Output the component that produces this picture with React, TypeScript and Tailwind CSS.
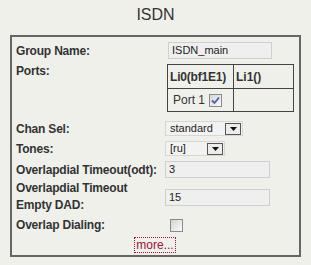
import React from "react";

const label = "text-[12px] font-bold tracking-[-0.2px] text-[#333]";

function Checkbox({ checked }: { checked?: boolean }) {
  return (
    <span className="inline-flex h-[13px] w-[13px] items-center justify-center border border-[#8a8a8a] bg-gradient-to-br from-[#d4d4d4] to-[#fbfbfb]">
      {checked && (
        <svg width="9" height="9" viewBox="0 0 9 9">
          <path d="M1 4.5 L3.5 7 L8 1.5" fill="none" stroke="#4a5fae" strokeWidth="1.8" />
        </svg>
      )}
    </span>
  );
}

function Select({ value, width }: { value: string; width: number }) {
  return (
    <div
      className="flex h-[15px] items-center justify-between border border-[#d6d6d6] bg-[#f2f2f2] pl-[4px] pr-[1px]"
      style={{ width }}
    >
      <span className="text-[11px] leading-none text-[#222]">{value}</span>
      <span className="flex h-[12px] w-[16px] items-center justify-center border border-[#555] bg-[#ececec]">
        <svg width="7" height="4" viewBox="0 0 7 4">
          <path d="M0 0 H7 L3.5 4 Z" fill="#111" />
        </svg>
      </span>
    </div>
  );
}

function TextBox({ value, width }: { value: string; width: number }) {
  return (
    <div
      className="flex h-[17px] items-center border border-[#cfcfcf] bg-[#efefef] pl-[3px] text-[11px] text-[#222]"
      style={{ width }}
    >
      {value}
    </div>
  );
}

export default function App() {
  return (
    <div className="h-[265px] w-[311px] bg-[#f0f0eb] font-['Liberation_Sans',Arial,sans-serif]">
      <div className="pt-[5px] text-center text-[16px] leading-[20px] text-[#333]">ISDN</div>
      <div className="mx-[10px] mt-[10px] h-[222px] border-2 border-[#666] pl-[4px]">
        {/* Group Name */}
        <div className="mt-[5px] flex h-[17px] items-center">
          <div className={`${label} w-[152px]`}>Group Name:</div>
          <TextBox value="ISDN_main" width={104} />
        </div>

        {/* Ports */}
        <div className="mt-[5px] flex items-start">
          <div className={`${label} w-[151px] leading-[14px]`}>Ports:</div>
          <table className="border-collapse border border-[#444] text-[12px] text-[#333]">
            <tbody>
              <tr className="h-[24px]">
                <td className="w-[66px] border border-[#444] pl-[2px] font-bold tracking-[-0.2px]">Li0(bf1E1)</td>
                <td className="w-[60px] border border-[#444] pl-[2px] font-bold">Li1()</td>
              </tr>
              <tr className="h-[23px]">
                <td className="border border-[#444] pl-[5px]">
                  <span className="inline-flex items-center gap-[4px]">
                    Port 1 <Checkbox checked />
                  </span>
                </td>
                <td className="border border-[#444]"></td>
              </tr>
            </tbody>
          </table>
        </div>

        {/* Chan Sel */}
        <div className="mt-[9px] flex h-[15px] items-center">
          <div className={`${label} w-[149px]`}>Chan Sel:</div>
          <Select value="standard" width={78} />
        </div>

        {/* Tones */}
        <div className="mt-[5px] flex h-[15px] items-center">
          <div className={`${label} w-[149px]`}>Tones:</div>
          <Select value="[ru]" width={60} />
        </div>

        {/* odt */}
        <div className="mt-[5px] flex h-[17px] items-center">
          <div className={`${label} w-[149px]`}>Overlapdial Timeout(odt):</div>
          <TextBox value="3" width={105} />
        </div>

        {/* Empty DAD */}
        <div className="mt-[3px] flex h-[32px] items-center">
          <div className={`${label} w-[149px] leading-[17px]`}>
            Overlapdial Timeout
            <br />
            Empty DAD:
          </div>
          <TextBox value="15" width={105} />
        </div>

        {/* Overlap Dialing */}
        <div className="mt-[5px] flex h-[14px] items-center">
          <div className={`${label} w-[154px]`}>Overlap Dialing:</div>
          <Checkbox />
        </div>

        <div className="mt-[5px] flex justify-center pr-[5px]">
          <span className="border border-dotted border-[#a0103a] px-[1px] text-[12px] leading-[14px] text-[#a0103a]">
            more...
          </span>
        </div>
      </div>
    </div>
  );
}
